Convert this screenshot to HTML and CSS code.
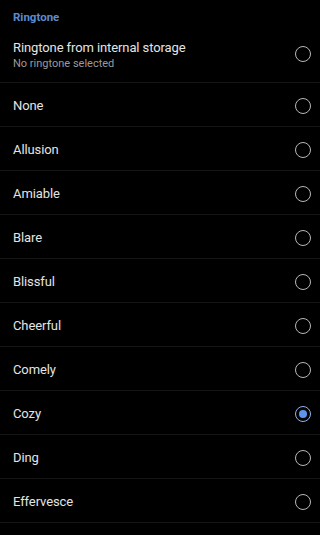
FILE: index.html
```html
<!DOCTYPE html>
<html lang="en">
<head>
    <meta charset="UTF-8">
    <meta name="viewport" content="width=device-width, initial-scale=1.0">
    <title>Ringtone</title>
    <link rel="stylesheet" href="styles.css">
</head>
<body>
    <div class="section-title">Ringtone</div>
    <ul class="tone-list">
        <li class="tone-item tall">
            <div class="tone-text">
                <div class="tone-name">Ringtone from internal storage</div>
                <div class="tone-sub">No ringtone selected</div>
            </div>
            <span class="radio"></span>
        </li>
        <li class="tone-item"><div class="tone-name">None</div><span class="radio"></span></li>
        <li class="tone-item"><div class="tone-name">Allusion</div><span class="radio"></span></li>
        <li class="tone-item"><div class="tone-name">Amiable</div><span class="radio"></span></li>
        <li class="tone-item"><div class="tone-name">Blare</div><span class="radio"></span></li>
        <li class="tone-item"><div class="tone-name">Blissful</div><span class="radio"></span></li>
        <li class="tone-item"><div class="tone-name">Cheerful</div><span class="radio"></span></li>
        <li class="tone-item"><div class="tone-name">Comely</div><span class="radio"></span></li>
        <li class="tone-item"><div class="tone-name">Cozy</div><span class="radio checked"></span></li>
        <li class="tone-item"><div class="tone-name">Ding</div><span class="radio"></span></li>
        <li class="tone-item"><div class="tone-name">Effervesce</div><span class="radio"></span></li>
    </ul>
</body>
</html>
```

FILE: styles.css
```css
* {
    margin: 0;
    padding: 0;
    box-sizing: border-box;
}

body {
    font-family: Roboto, "Noto Sans", sans-serif;
    background: #000;
    color: #e4e4e4;
    width: 320px;
    height: 535px;
    overflow: hidden;
}

.section-title {
    color: #5b8bd2;
    font-size: 11.5px;
    font-weight: 700;
    padding: 10px 13px 0;
    height: 30px;
}

.tone-list {
    list-style: none;
}

.tone-item {
    display: flex;
    align-items: center;
    justify-content: space-between;
    height: 44px;
    padding: 2px 9px 0 13px;
    border-bottom: 1px solid #151515;
}

.tone-item.tall {
    height: 53px;
    padding-top: 9px;
    align-items: flex-start;
}

.tone-name {
    font-size: 13px;
    line-height: 18px;
    letter-spacing: -0.1px;
    color: #e4e4e4;
}

.tone-sub {
    font-size: 11px;
    line-height: 14px;
    color: #9a9a9a;
}

.radio {
    width: 16px;
    height: 16px;
    border: 1.5px solid #b8b8b8;
    border-radius: 50%;
    display: flex;
    align-items: center;
    justify-content: center;
}

.tone-item.tall .radio {
    margin-top: 7px;
}

.radio.checked {
    border-color: #8fb4ec;
}

.radio.checked::after {
    content: '';
    width: 8px;
    height: 8px;
    border-radius: 50%;
    background: #5a96ee;
}
```
